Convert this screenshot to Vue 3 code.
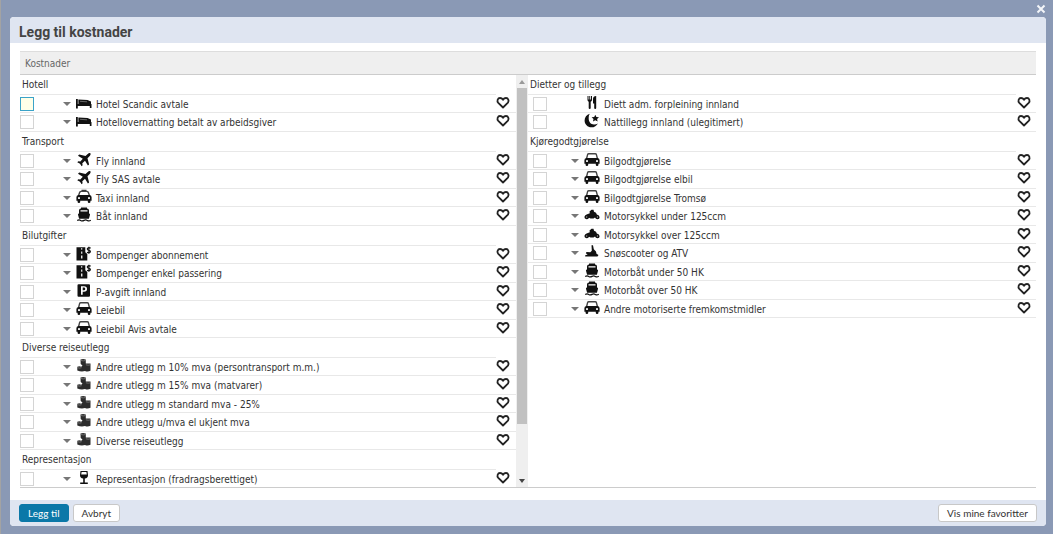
<script setup>
const left = [
  { title: 'Hotell', items: [['bed', 'Hotel Scandic avtale'], ['bed', 'Hotellovernatting betalt av arbeidsgiver']] },
  { title: 'Transport', items: [['plane', 'Fly innland'], ['plane', 'Fly SAS avtale'], ['taxi', 'Taxi innland'], ['boat', 'Båt innland']] },
  { title: 'Bilutgifter', items: [['road', 'Bompenger abonnement'], ['road', 'Bompenger enkel passering'], ['parking', 'P-avgift innland'], ['car', 'Leiebil'], ['car', 'Leiebil Avis avtale']] },
  { title: 'Diverse reiseutlegg', items: [['coins', 'Andre utlegg m 10% mva (persontransport m.m.)'], ['coins', 'Andre utlegg m 15% mva (matvarer)'], ['coins', 'Andre utlegg m standard mva - 25%'], ['coins', 'Andre utlegg u/mva el ukjent mva'], ['coins', 'Diverse reiseutlegg']] },
  { title: 'Representasjon', items: [['glass', 'Representasjon (fradragsberettiget)']] },
]
const right = [
  { title: 'Dietter og tillegg', plain: true, items: [['cutlery', 'Diett adm. forpleining innland'], ['night', 'Nattillegg innland (ulegitimert)']] },
  { title: 'Kjøregodtgjørelse', items: [['car', 'Bilgodtgjørelse'], ['car', 'Bilgodtgjørelse elbil'], ['car', 'Bilgodtgjørelse Tromsø'], ['motorcycle', 'Motorsykkel under 125ccm'], ['motorcycle', 'Motorsykkel over 125ccm'], ['snow', 'Snøscooter og ATV'], ['boat', 'Motorbåt under 50 HK'], ['boat', 'Motorbåt over 50 HK'], ['car', 'Andre motoriserte fremkomstmidler']] },
]
const panes = [{ name: 'left', groups: left }, { name: 'right', groups: right }]
</script>

<template>
  <div class="backdrop">
    <svg class="sprite" aria-hidden="true">
      <symbol id="bed" viewBox="0 0 16 16"><path d="M0 4h1.800v5H15.500v4H13.800V11H1.800v2.500H0z" /><path d="M2.400 4.500 11.500 5 15 6.500V9H2.400z" /><path d="M4 6.300 11 6.800" fill="none" stroke="#888" stroke-width=".7" /></symbol>
      <symbol id="plane" viewBox="0 0 16 16"><path d="M14.300 1.200c.7.700.2 2-.6 2.800L11.500 6.200l1.600 6.200-1.200 1.200L9 8.800 6.300 11.300l.3 1.900-1 1L4 11.700 1.300 10.200l1-1 2 .2L6.800 6.700 2 3.800l1.200-1.200 6.300 1.500 2.200-2.100c.8-.8 2-1.400 2.600-.8z" /></symbol>
      <symbol id="car" viewBox="0 0 16 16"><path d="M2.600 6.500 3.600 2.600Q3.800 1.700 4.800 1.700h6.400q1 0 1.200.9L13.400 6.500" fill="none" stroke="#444" stroke-width="1.400" /><path fill-rule="evenodd" d="M2.300 6h11.400Q15.600 6.400 15.600 8.200V11.800H14.400V13q0 1-1.300 1t-1.300-1v-1.200H4.200V13q0 1-1.300 1T1.600 13v-1.200H.4V8.200Q.4 6.400 2.300 6zM3 7.900a1.100 1.100 0 1 0 .01 0zM13 7.900a1.100 1.100 0 1 0 .01 0z" /></symbol>
      <symbol id="taxi" viewBox="0 0 16 16"><path d="M5.500 .8h5V2.500h-5z" fill="#333" /><path d="M2.600 6.500 3.600 3.500Q4.300 2.400 5.200 2.400h5.600q.9 0 1.600 1.100L13.400 6.500" fill="none" stroke="#444" stroke-width="1.400" /><path fill-rule="evenodd" d="M2.300 6h11.400Q15.600 6.400 15.600 8.200V11.800H14.400V13q0 1-1.300 1t-1.300-1v-1.200H4.200V13q0 1-1.300 1T1.600 13v-1.200H.4V8.200Q.4 6.400 2.300 6zM3 7.900a1.100 1.100 0 1 0 .01 0zM13 7.900a1.100 1.100 0 1 0 .01 0z" /></symbol>
      <symbol id="boat" viewBox="0 0 16 16"><path fill-rule="evenodd" d="M5 .5h6V1.500Q13 1.500 13 3.500V6.300l.8.600q.4.300.2.900L12.900 11.800H3.100L2 7.800q-.2-.6.200-.9L3 6.300V3.500Q3 1.500 5 1.500zM4.500 3.300v1.200h7V3.300z" /><path d="M1.200 13.600q1.800-1.300 3.500-.2 1.600.9 3.300 0 1.700-.9 3.300 0 1.700 1 3.500-.2" fill="none" stroke="currentColor" stroke-width="1.200" /></symbol>
      <symbol id="road" viewBox="0 0 16 16"><path fill-rule="evenodd" d="M.5 1.200h8.800v5L11.300 8v6.500H.5zM5.300 2v1.800h.9V2zM5.200 5.500v2.300h1.100V5.500zM5.100 9.500v3h1.300v-3z" /><path d="M14.600 2.300q-1-.8-2.200-.5-1.500.6-.9 1.800.4.500 1.700.7 1.600.5 1 1.900-1.200 1.300-3.200.1M12.900.7v7" fill="none" stroke="currentColor" stroke-width="1.200" /></symbol>
      <symbol id="parking" viewBox="0 0 16 16"><path fill-rule="evenodd" d="M2.500 1.200h10.500q1 0 1 1v10.500q0 1-1 1h-10.500q-1 0-1-1v-10.500q0-1 1-1zM5 3.200v8.500h1.700V8.700H8q3 0 3-2.700T8 3.200zM6.700 4.600h1.200q1.400 0 1.400 1.300T7.900 7.200H6.700z" /></symbol>
      <symbol id="coins" viewBox="0 0 16 16" color="#2c2c2c"><path d="M4.500 1.500q2.500-1 5.300 0V5.500H14.500V12.800q-2.800 1.400-5.500.2-3.500 1.200-7.700-.5V8.800q2-.9 4 0L6.500 7.500 4.700 6z" /><path d="M5 2.500q2.400.8 4.500 0M9.900 6.800q2.300.8 4.500 0M1.600 9.700q2 .8 4 0" fill="none" stroke="#999" stroke-width=".6" /></symbol>
      <symbol id="glass" viewBox="0 0 16 16"><path fill-rule="evenodd" d="M4.500 1h7l.5 4.200q0 2.800-3.200 3.300V12.500h3v1.500h-7.600v-1.500h3V8.500Q4 8 4 5.200zM5.600 2 5.200 4.500h5.600L10.400 2z" /></symbol>
      <symbol id="cutlery" viewBox="0 0 16 16"><path d="M3.500 1v4q0 1.300 1.200 1.700V13q0 1 1 1t1-1V6.700Q8 6.300 8 5V1H7v3.500h-.8V1h-.9v3.500h-.8V1zM12.200 1v12q0 1-1 1t-1-1V8.500H9V4q0-3 3.200-3z" /></symbol>
      <symbol id="night" viewBox="0 0 16 16"><path d="M5.800.8C2.600 1.700.6 4.400.6 7.500c0 3.800 3 6.800 6.800 6.800 2.900 0 5.300-1.500 6.500-3.900-1.200.8-2.500 1.100-3.900 1-3.300-.2-5.300-2.700-5.300-6C4.700 3.600 4.900 2 5.800.8z" /><path d="m11.300 1.800 1.100 2.200 2.600.2-1.900 1.800.5 2.600-2.300-1.300-2.300 1.300.5-2.600-1.900-1.800 2.600-.2z" /></symbol>
      <symbol id="motorcycle" viewBox="0 0 16 16"><path d="M5.500 4.500 7.500 2.800h2L10 4.800l2 1 .8 1.600Q15.600 8 15.600 10.200q0 2-2 2t-2.600-1.700L9.500 11.500H6.500L5 10.700Q4.300 12.200 2.500 12.200.4 12.100.4 10q.2-2 2.200-2.600L5.800 6.300z" /><path d="M2.700 9.300v1.500M13.400 9.300v1.500" stroke="#999" /></symbol>
      <symbol id="snow" viewBox="0 0 16 16"><path d="M7.500 1.200h1.500l.8 4 2.200 2.300.5 2.200 2 1.300-1 1.500H1.200v-1.200l2.500-.8L1.800 9.300 2.500 8l3.800.3 1.500-1.500z" /></symbol>
      <symbol id="heart" viewBox="0 0 14 14"><path d="M7 11.500 2.300 6.800C.6 4.900 1.700 2 4 2q1.900 0 3 1.900Q8.100 2 10 2c2.300 0 3.400 2.900 1.700 4.800z" fill="none" stroke="currentColor" stroke-width="1.800" stroke-linejoin="round" /></symbol>
    </svg>

    <button class="close" aria-label="Lukk"><svg viewBox="0 0 10 10"><path d="M1.500 1.500 8.500 8.500M8.500 1.500 1.500 8.500" /></svg></button>

    <section class="dialog" role="dialog" aria-labelledby="title">
      <h1 id="title">Legg til kostnader</h1>
      <div class="body">
        <h2>Kostnader</h2>
        <div class="panes">
          <template v-for="pane in panes" :key="pane.name">
            <div class="pane" :class="pane.name">
              <section v-for="group in pane.groups" :key="group.title">
                <h3>{{ group.title }}</h3>
                <ul>
                  <li v-for="([icon, label], i) in group.items" :key="label">
                    <input
                      :id="`${pane.name}-${label}`"
                      type="checkbox"
                      :class="{ current: group.title === 'Hotell' && i === 0 }"
                    />
                    <button v-if="!group.plain" class="expand" :aria-label="`Vis ${label}`"><svg viewBox="0 0 8 4"><path d="M0 0h8L4 4z" /></svg></button>
                    <span v-else class="expand"></span>
                    <svg class="icon" aria-hidden="true"><use :href="`#${icon}`" /></svg>
                    <label :for="`${pane.name}-${label}`">{{ label }}</label>
                    <button class="favourite" :aria-label="`Favoritt ${label}`"><svg><use href="#heart" /></svg></button>
                  </li>
                </ul>
              </section>
            </div>
            <div v-if="pane.name === 'left'" class="scrollbar" aria-hidden="true">
              <svg class="up" viewBox="0 0 6 4"><path d="M0 4h6L3 0z" /></svg>
              <div class="track"><div class="thumb"></div></div>
              <svg class="down" viewBox="0 0 6 4"><path d="M0 0h6L3 4z" /></svg>
            </div>
          </template>
        </div>
      </div>
      <footer>
        <button class="btn primary">Legg til</button>
        <button class="btn">Avbryt</button>
        <button class="btn favourites">Vis mine favoritter</button>
      </footer>
    </section>
  </div>
</template>

<style>
body {
  background: #8a99b5;
}
</style>

<style scoped>
.backdrop {
  box-sizing: border-box;
  min-height: 100vh;
  padding: 0 7px 7px 9px;
  border-left: 1px solid #a3a3a3;
  background: #8a99b5;
  font: 10px/19px "DejaVu Sans Condensed", "DejaVu Sans", sans-serif;
  color: #333;
}
.sprite {
  position: absolute;
  width: 0;
  height: 0;
}
button {
  padding: 0;
  border: 0;
  background: none;
  color: inherit;
  font: inherit;
}
svg {
  display: block;
  fill: currentColor;
}
.close {
  display: block;
  height: 17px;
  margin-left: auto;
}
.close svg {
  width: 10px;
  height: 10px;
  stroke: #f4f6fa;
  stroke-width: 2;
}
.dialog {
  overflow: hidden;
  border-radius: 4px;
  background: #fff;
}
h1 {
  margin: 0;
  padding: 4px 9px 0;
  height: 22px;
  background: #dfe5f1;
  font: bold 14px/22px Roboto, sans-serif;
  color: #444;
}
.body {
  padding: 8px 10px 12px;
}
h2 {
  margin: 0;
  padding: 1px 5px 0;
  border-top: 1px solid #ddd;
  border-bottom: 1px solid #ccc;
  background: #efefef;
  font: inherit;
  line-height: 21px;
  color: #666;
}
.panes {
  display: grid;
  grid-template-columns: 496fr 12px 508fr;
  border-bottom: 1px solid #ccc;
}
h3 {
  margin: 0 20px 0 0;
  padding-left: 2px;
  height: 19px;
  border-bottom: 1px solid #e8e8e8;
  font: inherit;
  line-height: 20px;
}
ul {
  margin: 0;
  padding: 0;
  list-style: none;
}
li {
  display: flex;
  align-items: flex-start;
  box-sizing: border-box;
  height: 18px;
  border-bottom: 1px solid #e8e8e8;
}
li:nth-child(even) {
  height: 19px;
}
.left section:last-child li:last-child {
  height: 17px;
  border-bottom: 0;
}
input {
  appearance: none;
  box-sizing: border-box;
  flex: none;
  width: 14px;
  height: 14px;
  margin: 2px 29px 0 0;
  border: 1px solid #d4d4d4;
  background: #fff;
}
.right input {
  margin: 2px 24px 0 5px;
}
input.current {
  border-color: #3ba3c8;
  background: #ffffe8;
}
.expand {
  flex: none;
  width: 8px;
  height: 4px;
  margin: 7px 5px 0 0;
  color: #777;
}
.expand svg {
  width: 8px;
  height: 4px;
}
.icon {
  flex: none;
  width: 16px;
  height: 16px;
  margin-right: 4px;
  color: #111;
}
label {
  flex: 1;
  white-space: nowrap;
}
.favourite {
  margin: 1px 6px 0 0;
  color: #222;
}
.right .favourite {
  margin-right: 5px;
}
.favourite svg {
  width: 14px;
  height: 14px;
}
.scrollbar {
  display: flex;
  flex-direction: column;
  align-items: center;
  background: #efefef;
}
.scrollbar > svg {
  flex: none;
  width: 6px;
  height: 4px;
  margin: 5px 0 4px;
  color: #999;
}
.scrollbar > .down {
  color: #444;
}
.track {
  flex: 1;
  width: 10px;
}
.thumb {
  height: 87%;
  background: #c1c1c1;
}
footer {
  display: flex;
  gap: 4px;
  padding: 4px 9px;
  background: #dfe5f1;
}
.btn {
  box-sizing: border-box;
  height: 18px;
  padding: 0 8px;
  border: 1px solid #c8c8c8;
  border-radius: 3px;
  background: #fff;
  font: 10px/16px Lato, sans-serif;
}
.primary {
  border-color: #0b78a8;
  background: #0b78a8;
  color: #fff;
}
.favourites {
  margin-left: auto;
}
</style>
